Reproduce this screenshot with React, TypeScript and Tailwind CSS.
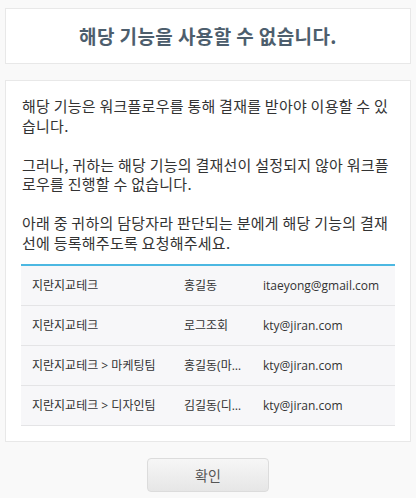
import React from "react";

const rows = [
  ["지란지교테크", "홍길동", "itaeyong@gmail.com"],
  ["지란지교테크", "로그조회", "kty@jiran.com"],
  ["지란지교테크 > 마케팅팀", "홍길동(마케팅팀)", "kty@jiran.com"],
  ["지란지교테크 > 디자인팀", "김길동(디자인팀)", "kty@jiran.com"],
];

export default function App() {
  return (
    <div
      className="w-[416px] h-[498px] bg-[#f9f9f9] px-[5px] pt-[8px] flex flex-col gap-[16px] text-[#333]"
      style={{ fontFamily: '"Open Sans", "Noto Sans CJK KR", sans-serif' }}
    >
      <div className="h-[56px] bg-white border border-[#e8e8e8] flex items-center justify-center">
        <h1
          className="text-[19px] font-bold text-[#4d5e6d] tracking-[0.4px]"
          style={{ fontFamily: '"Noto Sans CJK KR", sans-serif' }}
        >
          해당 기능을 사용할 수 없습니다.
        </h1>
      </div>
      <div className="bg-white border border-[#e8e8e8] px-[15px] pt-[15px] pb-[15px]">
        <p
          className="text-[15px] leading-[19.5px] px-[1px] text-[#333] tracking-[0.25px]"
          style={{ fontFamily: '"Noto Sans CJK KR", sans-serif' }}
        >
          해당 기능은 워크플로우를 통해 결재를 받아야 이용할 수 있습니다.
          <br />
          <br />
          그러나, 귀하는 해당 기능의 결재선이 설정되지 않아 워크플로우를 진행할 수 없습니다.
          <br />
          <br />
          아래 중 귀하의 담당자라 판단되는 분에게 해당 기능의 결재선에 등록해주도록 요청해주세요.
        </p>
        <div className="mt-[12px] border-t-2 border-[#4cb8e2]">
          {rows.map((r, i) => (
            <div
              key={i}
              className="h-[40px] bg-[#f7f7f9] border-b border-[#e4e4e6] flex items-center text-[12px] text-[#333]"
            >
              <div className="w-[152px] pl-[11px] truncate">{r[0]}</div>
              <div className="w-[79px] pl-[11px] pr-[4px] truncate">{r[1]}</div>
              <div className="flex-1 pl-[11px] truncate">{r[2]}</div>
            </div>
          ))}
        </div>
      </div>
      <div className="flex justify-center">
        <button
          className="w-[122px] h-[34px] rounded-[4px] border border-[#dcdcdc] bg-gradient-to-b from-[#f6f6f6] to-[#e6e6e6] text-[14px] text-[#555]"
          style={{ fontFamily: '"Noto Sans CJK KR", sans-serif' }}
        >
          확인
        </button>
      </div>
    </div>
  );
}
